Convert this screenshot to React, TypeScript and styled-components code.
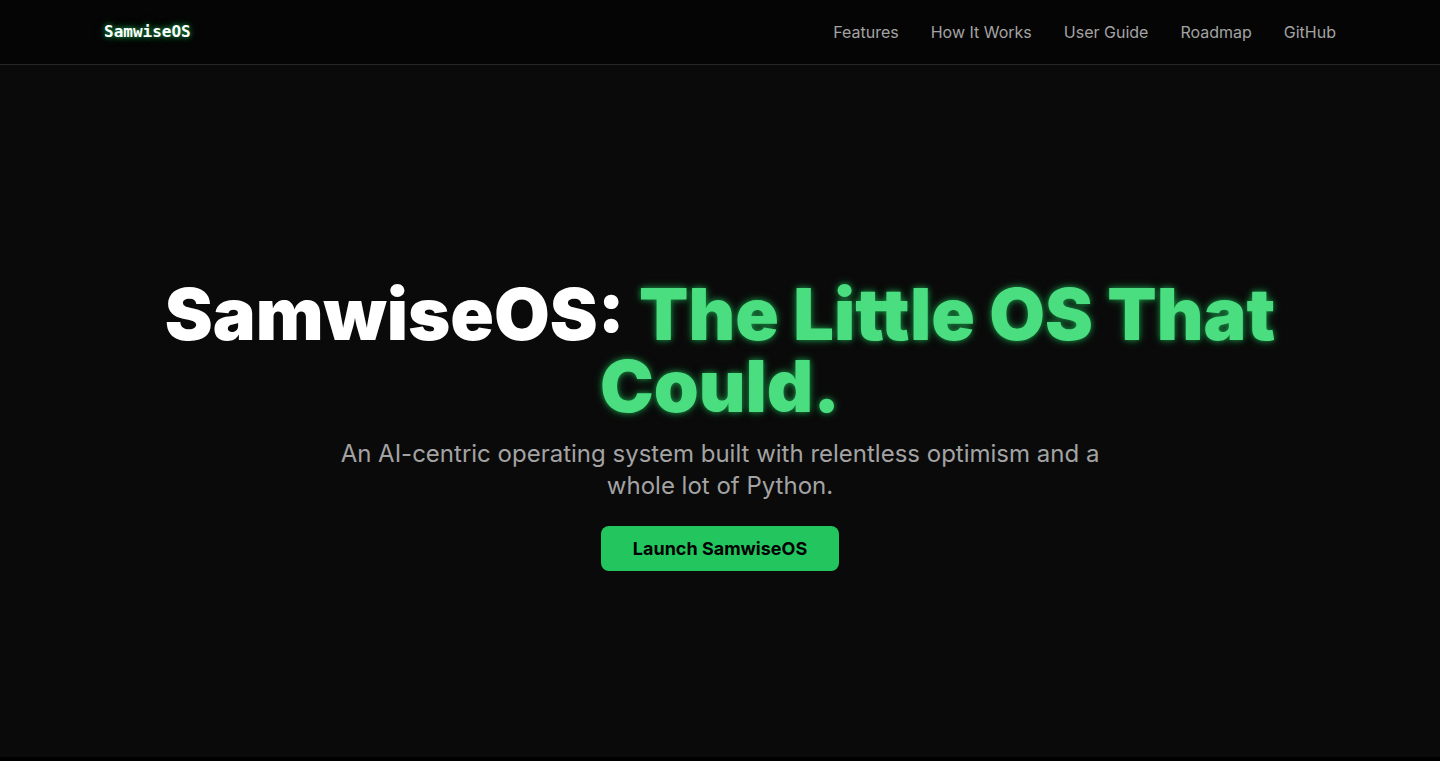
import React from "react";
import styled, { createGlobalStyle } from "styled-components";

const GlobalStyle = createGlobalStyle`
  *, *::before, *::after { box-sizing: border-box; }
  body {
    margin: 0;
    background: #000;
    color: #e5e5e5;
    font-family: Inter, sans-serif;
    font-size: 16px;
    line-height: 24px;
  }
`;

const Page = styled.div`
  display: flex;
  flex-direction: column;
  min-height: 100vh;
  padding-bottom: 4px;
`;

const Header = styled.header`
  background: #050505;
  border-bottom: 1px solid #262626;
`;

const Nav = styled.nav`
  display: flex;
  align-items: center;
  justify-content: space-between;
  max-width: 1280px;
  min-height: 64px;
  margin: 0 auto;
  padding: 16px 24px;
`;

const Logo = styled.a`
  color: #fff;
  font-family: "DejaVu Sans Mono", monospace;
  font-size: 16px;
  font-weight: 700;
  text-decoration: none;
  text-shadow: 0 0 5px rgba(34, 197, 94, 0.7), 0 0 10px rgba(34, 197, 94, 0.5);
`;

const NavLinks = styled.div`
  display: flex;
  flex-wrap: wrap;
  gap: 8px 32px;
`;

const NavLink = styled.a`
  color: #a3a3a3;
  text-decoration: none;
  &:hover { color: #4ade80; }
`;

const Hero = styled.main`
  display: flex;
  flex: 1;
  flex-direction: column;
  align-items: center;
  justify-content: center;
  padding: 27px 24px 0;
  background: #0a0a0a;
  text-align: center;
`;

const Title = styled.h1`
  max-width: 1232px;
  margin: 0 0 16px;
  color: #fff;
  font-size: 72px;
  font-weight: 900;
  line-height: 72px;
`;

const Glow = styled.span`
  color: #4ade80;
  text-shadow: 0 0 5px rgba(34, 197, 94, 0.5), 0 0 10px rgba(34, 197, 94, 0.5);
`;

const Tagline = styled.p`
  max-width: 768px;
  margin: 0 0 24px;
  color: #a3a3a3;
  font-size: 24px;
  line-height: 32px;
`;

const LaunchLink = styled.a`
  padding: 12px 32px;
  border-radius: 8px;
  background: #22c55e;
  color: #000;
  font-size: 18px;
  font-weight: 700;
  line-height: 21px;
  text-decoration: none;
  &:hover { background: #4ade80; }
`;

const links = [
  { label: "Features", href: "#features" },
  { label: "How It Works", href: "#how-it-works" },
  { label: "User Guide", href: "#user-guide" },
  { label: "Roadmap", href: "#roadmap" },
  { label: "GitHub", href: "#github" },
];

export default function App() {
  return (
    <>
      <GlobalStyle />
      <Page>
        <Header>
          <Nav>
            <Logo href="#top">SamwiseOS</Logo>
            <NavLinks>
              {links.map((link) => (
                <NavLink key={link.href} href={link.href}>{link.label}</NavLink>
              ))}
            </NavLinks>
          </Nav>
        </Header>
        <Hero id="top">
          <Title>
            SamwiseOS: <Glow>The Little OS That Could.</Glow>
          </Title>
          <Tagline>
            An AI-centric operating system built with relentless optimism and a whole lot of Python.
          </Tagline>
          <LaunchLink href="#launch">Launch SamwiseOS</LaunchLink>
        </Hero>
      </Page>
    </>
  );
}
